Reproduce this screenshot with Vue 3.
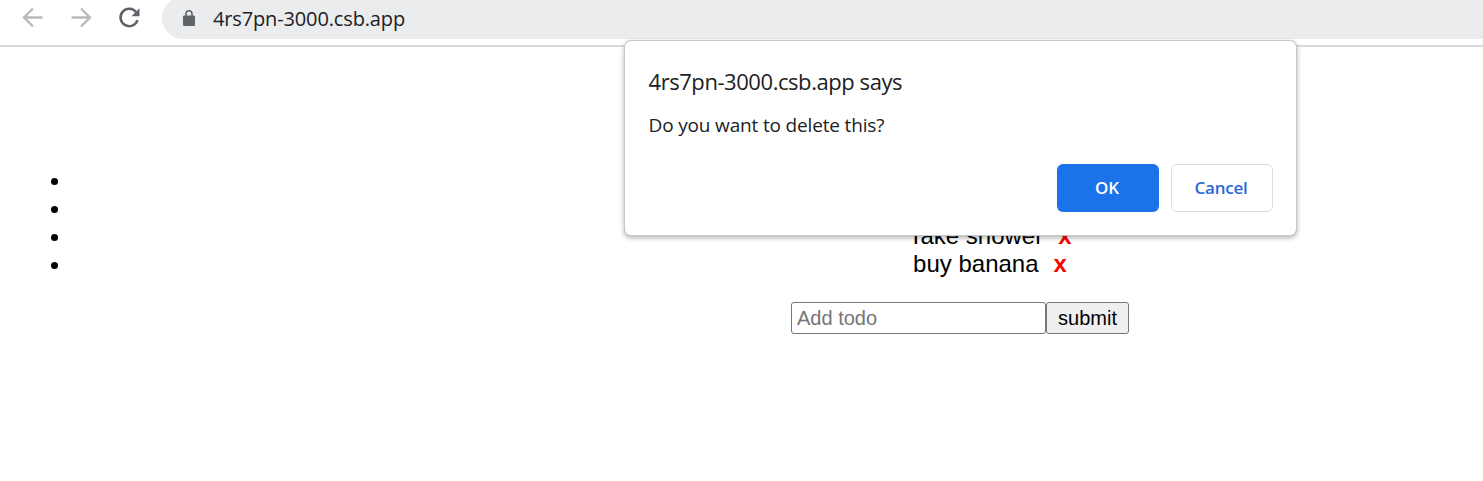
<script setup>
import { ref } from 'vue'

const host = '4rs7pn-3000.csb.app'
const todos = ref(['', '', 'Take shower', 'buy banana'])
const draft = ref('')
</script>

<template>
  <div class="window">
    <header class="toolbar">
      <svg class="nav" viewBox="0 0 24 24"><path d="M21.500 11.500H3M12 2.500L3 11.500l9 9" /></svg>
      <svg class="nav" viewBox="0 0 24 24"><path d="M2.500 11.500H21M12 2.500l9 9-9 9" /></svg>
      <svg class="reload" viewBox="0 0 24 24">
        <path class="arc" d="M19.300 6.300A8.700 8.700 0 1 0 20.500 14.200" />
        <path class="tip" d="M22.500 2.200V10.200h-8z" />
      </svg>
      <div class="address">
        <svg class="lock" viewBox="0 0 12 16">
          <rect x="0" y="5.500" width="12" height="10.500" rx="1.300" />
          <path d="M3 6V3.800a3 3 0 0 1 6 0V6" />
        </svg>
        <span class="url">{{ host }}</span>
      </div>
    </header>

    <main class="page">
      <ul>
        <li v-for="(todo, i) in todos" :key="i">
          <i class="dot"></i>
          <span class="item"><template v-if="todo">{{ todo }}<b>x</b></template></span>
        </li>
      </ul>
      <form @submit.prevent>
        <input v-model="draft" placeholder="Add todo" />
        <button type="submit">submit</button>
      </form>
    </main>

    <section class="dialog" role="dialog">
      <h1>{{ host }} says</h1>
      <p>Do you want to delete this?</p>
      <div class="actions">
        <button class="ok">OK</button>
        <button class="cancel">Cancel</button>
      </div>
    </section>
  </div>
</template>

<style>
body { background: #fff; }
</style>

<style scoped>
* { box-sizing: border-box; }
.window {
  position: relative;
  width: 1483px;
  height: 481px;
  overflow: hidden;
  background: #fff;
  color: #202124;
  font-family: "Open Sans", "Noto Sans", sans-serif;
}
.toolbar {
  display: flex;
  align-items: flex-start;
  height: 47px;
  padding-left: 21px;
  border-bottom: 2px solid #d9dadc;
}
.nav, .reload { flex: none; width: 24px; height: 24px; margin-top: 6px; margin-right: 24px; }
.nav path { fill: none; stroke: #b9babb; stroke-width: 2.4; }
.reload { margin-right: 21px; }
.arc { fill: none; stroke: #5f6368; stroke-width: 2.5; }
.tip { fill: #5f6368; }
.address {
  flex: 1;
  display: flex;
  align-items: center;
  height: 42px;
  margin-top: -3px;
  padding-left: 21px;
  border-radius: 21px 0 0 21px;
  background: #ebecee;
}
.lock { width: 12px; height: 16px; margin-right: 18px; }
.lock rect { fill: #5f6368; }
.lock path { fill: none; stroke: #5f6368; stroke-width: 1.6; }
.url { font-size: 20px; letter-spacing: -0.14px; white-space: nowrap; }
.page {
  width: 1920px;
  padding-top: 120px;
  font-family: "Liberation Sans", Arial, sans-serif;
  color: #000;
}
ul { margin: 0; padding: 0 0 0 60px; list-style: none; font-size: 24px; line-height: 28px; }
li { display: flex; align-items: center; height: 28px; }
.dot { width: 7px; height: 7px; margin: 0 2px 0 -9px; border-radius: 50%; background: #000; }
.item { flex: 1; padding-bottom: 2px; text-align: center; }
.item b { margin-left: 15px; color: #f00; }
form { display: flex; justify-content: center; margin-top: 23px; }
form input, form button {
  height: 32px;
  margin: 0;
  border: 1px solid #767676;
  border-radius: 3px;
  font: 20px "Liberation Sans", Arial, sans-serif;
}
form input { width: 255px; padding: 0 5px; background: #fff; outline: none; }
form input::placeholder { color: #757575; opacity: 1; }
form button { width: 83px; padding: 0; background: #efefef; color: #000; }
.dialog {
  position: absolute;
  left: 625px;
  top: 41px;
  width: 671px;
  height: 194px;
  padding: 24px 23px 24px 23.5px;
  border-radius: 6px;
  background: #fff;
  box-shadow: 0 0 0 1px #c8c8c8, 0 2px 5px 1px rgba(0, 0, 0, 0.3);
}
h1 { margin: 0; font-size: 22px; font-weight: 400; line-height: 32px; letter-spacing: -0.44px; }
p { margin: 8px 0 0; font-size: 19px; line-height: 40px; letter-spacing: -0.16px; }
.actions { display: flex; justify-content: flex-end; gap: 12px; margin-top: 19px; }
.actions button {
  width: 102px;
  height: 48px;
  padding: 0 2px 2px 0;
  border-radius: 6px;
  font-family: "Open Sans", "Noto Sans", sans-serif;
  font-size: 17px;
  font-weight: 600;
  letter-spacing: -0.2px;
}
.ok { border: 0; background: #1a73e8; color: #fff; }
.cancel { border: 1px solid #dadce0; background: #fff; color: #2a69d6; }
</style>
